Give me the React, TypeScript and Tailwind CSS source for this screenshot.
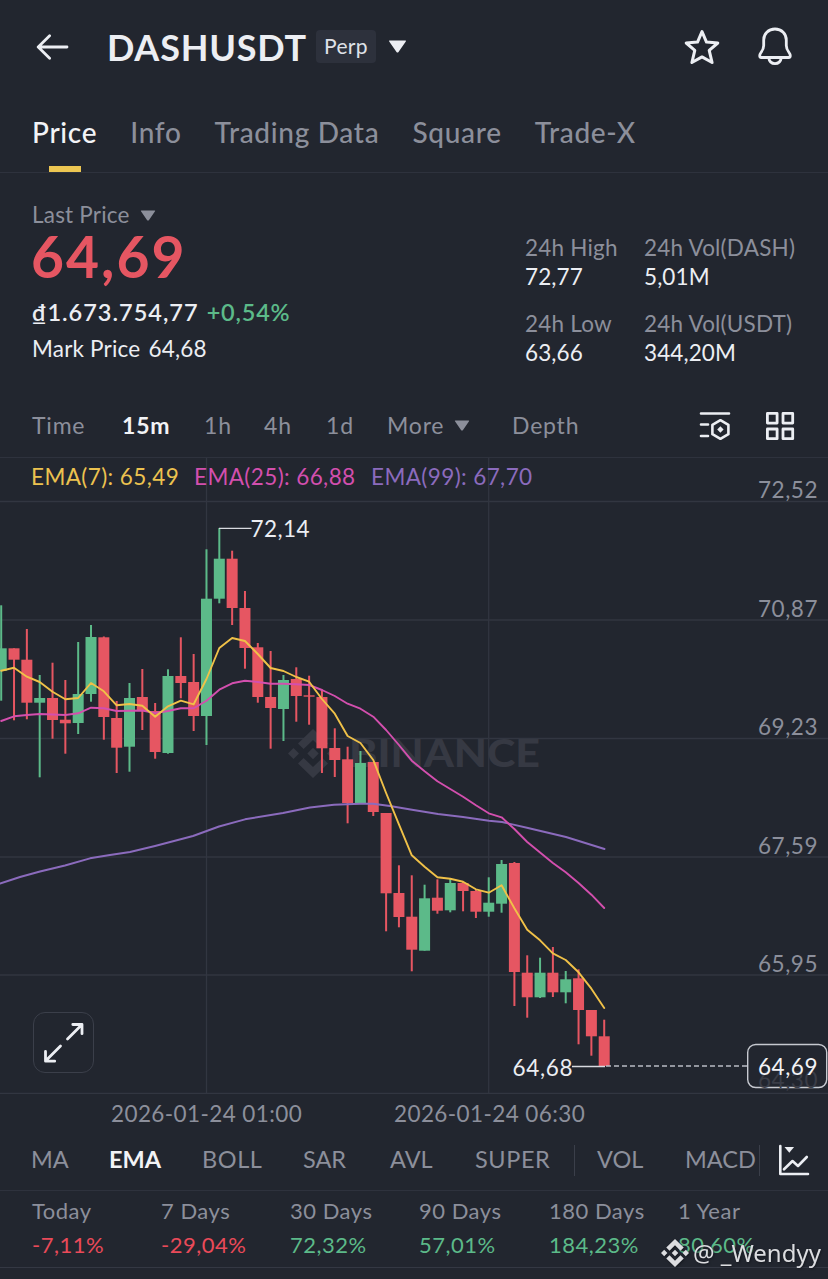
import React, { useState } from "react";

type Candle = {
    up: boolean;
    high: number;
    top: number;
    bottom: number;
    low: number;
};

const STEP = 12.83;
const cx = (i: number) => 1.2 + i * STEP;

// [up, high, body top, body bottom, low] in chart space
const RAW: [number, number, number, number, number][] = [
    [1, 605.3, 648.3, 671, 700.7],
    [0, 648.3, 648.3, 659.7, 720.3],
    [0, 629, 659.7, 702.7, 719.3],
    [1, 675, 698, 702.7, 777.3],
    [0, 662.7, 698, 720, 738.7],
    [0, 680, 719.7, 723.3, 753.7],
    [1, 642, 694, 723, 734],
    [1, 625, 637, 694, 701.7],
    [0, 636.5, 637.3, 717, 739.7],
    [0, 701, 718, 747.7, 773],
    [1, 683, 698, 746.7, 771.7],
    [0, 669, 697, 711, 730],
    [0, 703, 711, 752, 758.7],
    [1, 669.3, 676, 753, 753.7],
    [0, 637.3, 676, 683, 698.3],
    [0, 654, 682, 716, 731],
    [1, 549.3, 598.7, 716, 745],
    [1, 528, 558.7, 598.7, 603.3],
    [0, 550.7, 558.7, 608, 625],
    [0, 591, 608, 648, 668.7],
    [0, 643, 647.3, 697, 702.7],
    [0, 651, 697, 708, 748.7],
    [1, 675, 680, 709, 741],
    [0, 667.3, 679, 696, 721.7],
    [0, 675.7, 695.3, 696.7, 724.7],
    [0, 689.3, 697, 748.3, 773],
    [0, 728.3, 748, 760, 777],
    [0, 746.7, 759.3, 803, 823.3],
    [1, 751, 763, 803, 803],
    [0, 762, 762, 812, 816],
    [0, 813, 813, 893.3, 931.3],
    [0, 865.3, 893, 917, 927.3],
    [0, 875.3, 916.7, 949.7, 971.3],
    [1, 884.7, 898.3, 950.7, 950.7],
    [0, 879.3, 897.7, 910.7, 913.7],
    [1, 878, 883, 910.3, 912.3],
    [0, 882, 883, 891, 911.3],
    [0, 889, 891, 911.7, 918],
    [1, 877.3, 902.7, 911.7, 916.7],
    [1, 860, 864, 903.7, 912.7],
    [0, 862, 863, 972, 1006],
    [0, 955.3, 972.7, 997.3, 1017.7],
    [1, 957.7, 972.7, 997.3, 998],
    [0, 947, 972.7, 992.3, 997],
    [1, 971, 979.3, 992.3, 1003.3],
    [0, 969.3, 978.3, 1010, 1044.3],
    [0, 1010, 1010, 1036.3, 1055.7],
    [0, 1019.7, 1036.3, 1066, 1066],
];

const candles: Candle[] = RAW.map(([up, high, top, bottom, low]) => ({
    up: up === 1,
    high,
    top,
    bottom,
    low,
}));

const EMA7 = [
    670.7, 667.7, 676.7, 682, 691.7, 699.3, 698, 683, 691.3, 705.3, 704, 705.7, 716.7, 706.3, 700.7, 704.3,
    679, 648, 638, 641, 654, 668, 671, 677, 681.7, 699, 713.7, 736, 743, 760, 793, 824.3,
    855.3, 866.7, 877.3, 878.7, 881.7, 889.3, 892.7, 885.3, 908.3, 929.7, 940.3, 953.3, 960, 972.3, 988.7, 1008,
];

const EMA25 = [
    721, 716.3, 715, 714, 714.5, 715, 713.3, 707.7, 708.3, 711, 710.7, 710.5, 713, 711, 708.3, 708.3,
    700.7, 689.7, 683.3, 680.7, 682, 683.7, 683.7, 684.3, 685, 690, 696, 703.7, 708.7, 716.7, 730, 745,
    760.7, 771.3, 781.3, 789, 796.7, 805.3, 813.3, 817.3, 829, 842, 852.5, 863, 872.3, 883, 894.7, 908,
];

const EMA99: [number, number][] = [
    [0, 883.5], [20, 877], [40, 871.5], [65, 865.5], [90, 858.3], [110, 855], [130, 852], [155, 846], [193, 836],
    [219, 826.5], [245, 819.3], [283, 813], [310, 807.5], [334, 804.7], [360, 803.7], [373, 803.7], [390, 806],
    [412, 809.7], [438, 814], [463, 817], [489, 820.7], [502, 822], [528, 828], [566, 837], [604.5, 849],
];

const toPoints = (arr: number[]) => arr.map((y, i) => `${cx(i)},${y}`).join(" ");

const TABS = ["Price", "Info", "Trading Data", "Square", "Trade-X"];
const INTERVALS = ["Time", "15m", "1h", "4h", "1d"];
const INDICATORS = ["MA", "EMA", "BOLL", "SAR", "AVL", "SUPER"];

const AXIS = [
    { label: "72,52", y: 501.5 },
    { label: "70,87", y: 620 },
    { label: "69,23", y: 738.5 },
    { label: "67,59", y: 857 },
    { label: "65,95", y: 975 },
];

const PERFORMANCE = [
    { label: "Today", value: "-7,11%", up: false },
    { label: "7 Days", value: "-29,04%", up: false },
    { label: "30 Days", value: "72,32%", up: true },
    { label: "90 Days", value: "57,01%", up: true },
    { label: "180 Days", value: "184,23%", up: true },
    { label: "1 Year", value: "80,60%", up: true },
];

function Caret({ className }: { className: string }) {
    return (
        <svg viewBox="0 0 18 13" className={className} fill="currentColor">
            <path d="M1.2 0.5h15.6q1.2 0 .5 1L10 12q-1 1-2 0L.7 1.5q-.7-1 .5-1z" />
        </svg>
    );
}

function BinanceMark({ className }: { className: string }) {
    return (
        <svg viewBox="0 0 48 48" className={className} fill="currentColor">
            <path d="M24 0l15 14.6-5.6 5.5L24 10.9l-9.4 9.2L9 14.6z" />
            <path d="M24 48l15-14.6-5.6-5.5L24 37.1l-9.4-9.2L9 33.4z" />
            <path d="M24 18.4l5.6 5.6-5.6 5.6-5.6-5.6zM5.5 18.5L11 24l-5.5 5.5L0 24zM42.5 18.5L48 24l-5.5 5.5L37 24z" />
        </svg>
    );
}

function Header() {
    return (
        <header className="flex h-[93px] items-center pl-9 pr-[35px]">
            <svg viewBox="0 0 34 26" className="h-[26px] w-[34px]" fill="none" stroke="#eceef3" strokeWidth="2.8" strokeLinecap="round" strokeLinejoin="round">
                <path d="M13.6 1.8L2.2 13l11.4 11.2M2.5 13H31" />
            </svg>
            <h1 className="ml-[37px] w-[209px] whitespace-nowrap text-[36px] font-bold leading-none tracking-[0.8px] text-[#eceef3]">DASHUSDT</h1>
            <span className="flex h-[33px] w-[60px] items-center justify-center rounded bg-[#2d313c] pb-0.5 text-[21px] tracking-[0.3px] text-[#dfe1e7]">Perp</span>
            <Caret className="ml-3 h-[13px] w-[19px] text-[#eceef3]" />
            <div className="ml-auto flex items-center gap-[37px] pb-0.5">
                <svg viewBox="0 0 36 36" className="mt-0.5 h-9 w-9" fill="none" stroke="#eceef3" strokeWidth="3" strokeLinejoin="round">
                    <path d="M18 2.6l4.5 10.5 11.3.9-8.6 7.4 2.9 12.1L18 27.9 7.9 33.5l2.9-12.1L2.2 14l11.3-.9z" />
                </svg>
                <svg viewBox="0 0 36 40" className="h-10 w-9" fill="none" stroke="#eceef3" strokeWidth="2.8" strokeLinejoin="round">
                    <path d="M18 3C11.3 3 6.7 7.8 6.7 14v5.5c0 3.2-1 4.8-2.7 7-1.5 2-2 5 .3 5h27.4c2.3 0 1.8-3 .3-5-1.7-2.2-2.7-3.8-2.7-7V14C29.3 7.8 24.7 3 18 3z" />
                    <path d="M11.8 32c.5 3.5 3 5.6 6.2 5.6s5.7-2.1 6.2-5.6" />
                </svg>
            </div>
        </header>
    );
}

function Tabs() {
    const [active, setActive] = useState("Price");
    return (
        <nav className="flex h-20 gap-[33px] border-b border-[#2e323d] pl-8">
            {TABS.map((t) => (
                <button
                    key={t}
                    onClick={() => setActive(t)}
                    className={`relative h-full whitespace-nowrap pb-0.5 text-[28px] font-medium tracking-[0.7px] ${active === t ? "text-[#f2f3f6]" : "text-[#8c8f9b]"}`}
                >
                    {t}
                    {active === t && <span className="absolute bottom-0 left-1/2 h-1.5 w-8 -translate-x-1/2 bg-[#ecc652]" />}
                </button>
            ))}
        </nav>
    );
}

function Stat({ label, value }: { label: string; value: string }) {
    return (
        <div className="whitespace-nowrap text-[22.5px] leading-[30px]">
            <div className="tracking-[0.2px] text-[#8c8f9b]">{label}</div>
            <div className="-mt-px mb-px tracking-[0.1px] text-[#eceef3]">{value}</div>
        </div>
    );
}

function Summary() {
    return (
        <section className="flex h-[221px] pl-[31px] pt-7">
            <div className="w-[494px]">
                <div className="flex h-7 items-center gap-2.5 pl-px text-[22.5px] tracking-[0.2px] text-[#8c8f9b]">
                    Last Price
                    <Caret className="h-[11px] w-4 text-[#8c8f9b]" />
                </div>
                <div className="-mt-0.5 h-[58px] text-[57px] font-bold leading-[58px] tracking-[2px] text-[#e65662]">64,69</div>
                <div className="mt-3 flex h-8 items-center gap-2 pl-px text-[23.5px] font-semibold tracking-[1px] text-[#eceef3]">
                    <span>₫1.673.754,77</span>
                    <span className="tracking-[0.8px] text-[#5cba89]">+0,54%</span>
                </div>
                <div className="mt-1 flex h-8 items-center gap-2 pl-px text-[22.5px] tracking-[0.2px] text-[#eceef3]">
                    <span>Mark Price</span>
                    <span>64,68</span>
                </div>
            </div>
            <div className="grid grid-cols-[119px_160px] content-start gap-y-4 pt-8">
                <Stat label="24h High" value="72,77" />
                <Stat label="24h Vol(DASH)" value="5,01M" />
                <Stat label="24h Low" value="63,66" />
                <Stat label="24h Vol(USDT)" value="344,20M" />
            </div>
        </section>
    );
}

function Intervals() {
    const [active, setActive] = useState("15m");
    return (
        <div className="flex h-16 items-center border-b border-[#2e323d] pl-8 pr-[33px] text-[23px] tracking-[0.8px] text-[#8c8f9b]">
            <div className="grid grid-cols-[90px_82px_60px_62px_61px]">
                {INTERVALS.map((t) => (
                    <button
                        key={t}
                        onClick={() => setActive(t)}
                        className={`text-left ${active === t ? "font-bold text-[#f2f3f6]" : ""}`}
                    >
                        {t}
                    </button>
                ))}
            </div>
            <div className="flex w-[125px] items-center gap-2.5">
                More
                <Caret className="h-[11px] w-4" />
            </div>
            <div>Depth</div>
            <svg viewBox="0 0 32 30" className="ml-auto h-[30px] w-8" fill="none" stroke="#eceef3" strokeWidth="2.6" strokeLinecap="round" strokeLinejoin="round">
                <path d="M2 2.5h28M2 13.500h7M2 25h7" />
                <path d="M21.4 9.2l8 4.6v9.4l-8 4.6-8-4.6v-9.4z" />
                <path d="M21.4 15.3l3.2 3.2-3.2 3.2-3.2-3.2z" fill="#eceef3" stroke="none" />
            </svg>
            <svg viewBox="0 0 30 30" className="ml-[34px] h-[30px] w-[30px]" fill="none" stroke="#eceef3" strokeWidth="2.8" strokeLinejoin="round">
                <path d="M2.4 2.4h9.7v9.7H2.4zM18 2.4h9.7v9.7H18zM2.4 18h9.7v9.7H2.4zM18 18h9.7v9.7H18z" />
            </svg>
        </div>
    );
}

function Chart() {
    return (
        <div className="relative h-[636px]">
            <svg viewBox="0 458 828 636" className="block h-[636px] w-[828px]" fontSize="22.5">
                <g stroke="#323641" strokeWidth="1.3">
                    {AXIS.map((a) => (
                        <line key={a.y} x1="0" x2="828" y1={a.y} y2={a.y} />
                    ))}
                    <line x1="0" x2="828" y1="1093.3" y2="1093.3" />
                    <line x1="206.5" x2="206.5" y1="458" y2="1093" />
                    <line x1="488.7" x2="488.7" y1="458" y2="1093" />
                </g>
                <g fill="#363943">
                    <path d="M313 729l15 14.6-5.6 5.5-9.4-9.2-9.4 9.2-5.6-5.5zM313 778l15-14.6-5.6-5.5-9.4 9.2-9.4-9.2-5.6 5.5zM313 747.8l5.7 5.7-5.7 5.7-5.7-5.7zM293.5 748l5.5 5.5-5.5 5.5-5.5-5.5zM332.5 748l5.5 5.5-5.5 5.5-5.5-5.5z" />
                    <text x="349" y="767" fontSize="37" fontWeight="900" textLength="191" lengthAdjust="spacingAndGlyphs">BINANCE</text>
                </g>
                {candles.map((c, i) => (
                    <g key={i} fill={c.up ? "#5cba89" : "#e65662"}>
                        <rect x={cx(i) - 1} y={c.high} width="2" height={c.low - c.high} />
                        <rect x={cx(i) - 5.5} y={c.top} width="11" height={c.bottom - c.top} />
                    </g>
                ))}
                <g fill="none" strokeWidth="1.9" strokeLinejoin="round" strokeLinecap="round">
                    <polyline points={EMA99.map((p) => p.join(",")).join(" ")} stroke="#8b6bbd" />
                    <polyline points={toPoints(EMA25)} stroke="#d34fae" />
                    <polyline points={toPoints(EMA7)} stroke="#f0c148" />
                </g>
                <path d="M219 528.3h32.5M572 1066.5h33" stroke="#d8dae0" strokeWidth="1.3" />
                <path d="M606 1066h142" stroke="#b9bcc5" strokeWidth="1.4" strokeDasharray="5 3" />
                <g fill="#eceef3">
                    <text x="250.5" y="537" textLength="59">72,14</text>
                    <text x="512.5" y="1075.5" textLength="60">64,68</text>
                </g>
                <g fill="#8c8f9b">
                    {AXIS.map((a) => (
                        <text key={a.label} x="758" y={a.y - 3.5} textLength="59.5">{a.label}</text>
                    ))}
                </g>
                <rect x="747.7" y="1044.5" width="79" height="43" rx="8" fill="#22262f" stroke="#c6c9d0" strokeWidth="1.4" />
                <text x="758" y="1087.5" textLength="59.5" fill="#3a3d47">64,30</text>
                <text x="758" y="1075" textLength="59.5" fill="#f2f3f6">64,69</text>
            </svg>
            <div className="absolute left-[31px] top-[6px] flex whitespace-nowrap text-[22.5px] leading-[26px] tracking-[0.4px]">
                <span className="w-[163px] text-[#ecc24f]">EMA(7): 65,49</span>
                <span className="w-[177px] text-[#d34fae]">EMA(25): 66,88</span>
                <span className="text-[#8b6bbd]">EMA(99): 67,70</span>
            </div>
            <button className="absolute bottom-[21px] left-[33px] flex h-[61px] w-[61px] items-center justify-center rounded-xl border border-[#3b3f4a]">
                <svg viewBox="0 0 40 40" className="h-10 w-10" fill="none" stroke="#eceef3" strokeWidth="2.8" strokeLinecap="round" strokeLinejoin="round">
                    <path d="M23.5 16L37.5 2M28.800 1.5H38v9.200M16.500 23L2 37.500M1.500 28.500v9.700h9.200" />
                </svg>
            </button>
        </div>
    );
}

function Indicators() {
    return (
        <div className="flex h-[58px] items-center border-b border-[#2e323d] pb-[3px] pl-[31px] pr-[18px] text-[23.5px] text-[#8c8f9b]">
            <div className="grid grid-cols-[78px_93px_101px_87px_85px_99px] whitespace-nowrap">
                {INDICATORS.map((t) => (
                    <span key={t} className={t === "EMA" ? "font-bold text-[#f2f3f6]" : t.length > 3 ? "tracking-[0.6px]" : ""}>{t}</span>
                ))}
            </div>
            <span className="mr-[22px] h-[31px] w-px bg-[#3b3f4a]" />
            <span className="w-[88px]">VOL</span>
            <span className="w-[74px]">MACD</span>
            <span className="h-[31px] w-px bg-[#3b3f4a]" />
            <svg viewBox="0 0 32 32" className="ml-auto h-8 w-8" fill="none" stroke="#eceef3" strokeWidth="2.6" strokeLinecap="round" strokeLinejoin="round">
                <path d="M2.3 2v28H30M6 25.3l8.5-8.3 5.5 5 8.8-9" />
                <path d="M6.500 3h9.600L11.300 8.800z" fill="#eceef3" stroke="none" />
            </svg>
        </div>
    );
}

function Performance() {
    return (
        <div className="relative h-[77px] border-b border-[#343843] pl-8">
            <div className="grid grid-cols-[129px_129px_129px_130px_129px_140px] whitespace-nowrap pt-[3px] text-[22px] leading-[34px] tracking-[0.5px]">
                {PERFORMANCE.map((p) => (
                    <div key={p.label}>
                        <div className="text-[#8c8f9b]">{p.label}</div>
                        <div className={p.up ? "text-[#5cba89]" : "text-[#ea4a59]"}>{p.value}</div>
                    </div>
                ))}
            </div>
            <div className="absolute left-[661px] top-[48px] flex items-center gap-1 text-[#dcdde0] drop-shadow-[1px_1px_1px_#15181f]">
                <BinanceMark className="h-7 w-7" />
                <span className="whitespace-nowrap font-['Noto_Sans',sans-serif] text-[24px] leading-7">@ _Wendyy</span>
            </div>
        </div>
    );
}

export default function App() {
    return (
        <div className="h-[1279px] w-[828px] overflow-hidden bg-[#22262f] font-[Lato,sans-serif]">
            <Header />
            <Tabs />
            <Summary />
            <Intervals />
            <Chart />
            <div className="flex h-[39px] items-center whitespace-nowrap pl-[111px] text-[22.5px] tracking-[0.4px] text-[#8c8f9b]">
                <span className="w-[283px]">2026-01-24 01:00</span>
                <span>2026-01-24 06:30</span>
            </div>
            <Indicators />
            <Performance />
        </div>
    );
}
